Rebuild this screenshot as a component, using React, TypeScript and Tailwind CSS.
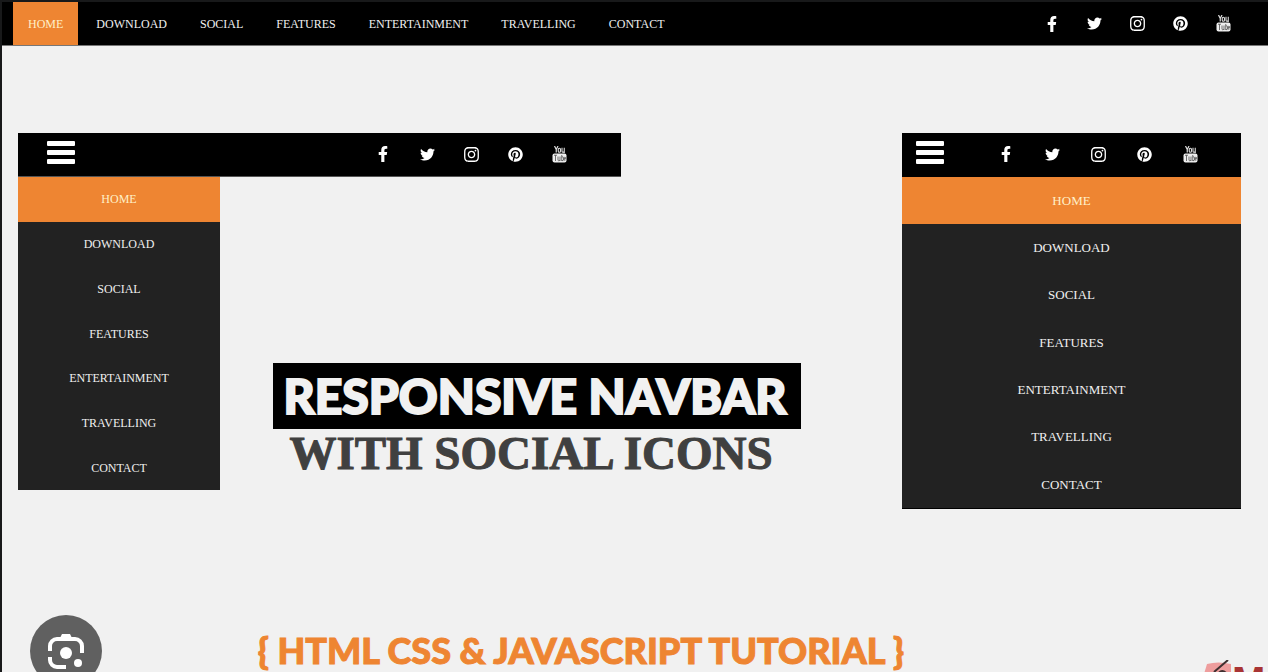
import { FaFacebookF, FaInstagram, FaPinterest, FaTwitter } from "react-icons/fa";

const links = ["HOME", "DOWNLOAD", "SOCIAL", "FEATURES", "ENTERTAINMENT", "TRAVELLING", "CONTACT"];

function YouTubeIcon() {
  return (
    <svg viewBox="0 0 30 34" className="h-[17px] w-[15px]" aria-hidden="true">
      <path d="M5 0l3.5 7v6M12 0L8.5 7" fill="none" stroke="#ddd" strokeWidth="2.4" />
      <rect x="12.5" y="4.5" width="4.5" height="8" rx="2" fill="none" stroke="#ddd" strokeWidth="2.2" />
      <path d="M20 3.5v7q0 2 2 2t2.5-2M24.5 3.5V14" fill="none" stroke="#ddd" strokeWidth="2.2" />
      <rect x="1" y="15" width="28" height="18" rx="4" fill="#eee" />
      <path d="M4 18.5h6M7 18.5V30M12 21v7q0 1.500 1.500 1.500t2.500-1.500M16 21v9M19.500 18v12M19.500 22q3.500-1 3.500 1v5q0 2-3.500 1M26.800 28q-2 2-2-1v-4q1-2 2.200 0v2.500h-2" fill="none" stroke="#444" strokeWidth="1.500" />
    </svg>
  );
}

const socials = [
  { name: "Facebook", icon: <FaFacebookF size={16} /> },
  { name: "Twitter", icon: <FaTwitter size={15} /> },
  { name: "Instagram", icon: <FaInstagram size={17} /> },
  { name: "Pinterest", icon: <FaPinterest size={15} /> },
  { name: "YouTube", icon: <YouTubeIcon /> },
];

function Socials({ cell }: { cell: string }) {
  return (
    <ul className="flex items-center text-white">
      {socials.map((s) => (
        <li key={s.name} className={cell}>
          <a href="#" aria-label={s.name} className="flex h-[42px] items-center justify-center">
            {s.icon}
          </a>
        </li>
      ))}
    </ul>
  );
}

function MenuButton() {
  return (
    <button type="button" aria-label="Toggle menu" className="mt-2 flex w-7 flex-col gap-1">
      <span className="h-[5px] rounded-[1px] bg-white" />
      <span className="h-[5px] rounded-[1px] bg-white" />
      <span className="h-[5px] rounded-[1px] bg-white" />
    </button>
  );
}

function SideMenu({ height }: { height: string }) {
  return (
    <ul className={`flex flex-col bg-[#222222] ${height}`}>
      {links.map((label, i) => (
        <li key={label} className="flex-1">
          <a
            href="#"
            className={`flex h-full items-center justify-center ${i === 0 ? "bg-[#ee8532] text-[#fff0c8]" : "text-[#f0f0f0]"}`}
          >
            {label}
          </a>
        </li>
      ))}
    </ul>
  );
}

export default function App() {
  return (
    <div className="relative flex h-screen flex-col overflow-hidden border-t-2 border-l-2 border-[#18191a] bg-[#f1f1f1] font-['Liberation_Serif',serif]">
      <header className="flex shrink-0 items-center justify-between border-b border-[#777] bg-black pr-[23px] pl-[11px]">
        <nav aria-label="Main">
          <ul className="flex gap-[3px] text-[12px] text-[#f0f0f0]">
            {links.map((label, i) => (
              <li key={label}>
                <a
                  href="#"
                  className={`flex h-[43px] items-center px-[15px] ${i === 0 ? "bg-[#ee8532] text-[#fff0c8]" : ""}`}
                >
                  {label}
                </a>
              </li>
            ))}
          </ul>
        </nav>
        <Socials cell="w-[43px]" />
      </header>

      <main className="flex shrink-0 flex-col pt-[87px]">
        <div className="flex items-start justify-between pr-[27px] pl-4">
          <section>
            <div className="flex h-11 w-[603px] items-start justify-between border-b border-[#555] bg-black pr-10 pl-[29px]">
              <MenuButton />
              <Socials cell="w-11" />
            </div>
            <div className="flex items-start">
              <nav aria-label="Tablet" className="w-[202px] shrink-0 text-[12px]">
                <SideMenu height="h-[313px]" />
              </nav>
              <h1 className="ml-[53px] pt-[186px] text-center whitespace-nowrap">
                <span className="flex h-[66px] w-[528px] items-center justify-center bg-black pr-1 font-['Lato',sans-serif] text-[48px] font-black text-[#f1f1f1] [-webkit-text-stroke:2px_#f1f1f1]">
                  RESPONSIVE NAVBAR
                </span>
                <span className="block pr-3 text-[47px] leading-[48px] font-bold text-[#404040] [-webkit-text-stroke:1px_#404040]">
                  WITH SOCIAL ICONS
                </span>
              </h1>
            </div>
          </section>

          <section className="w-[339px]">
            <div className="flex h-11 items-start justify-between bg-black pr-7 pl-[14px]">
              <MenuButton />
              <Socials cell="w-[46px]" />
            </div>
            <nav aria-label="Phone" className="border-b border-black text-[13px]">
              <SideMenu height="h-[331px]" />
            </nav>
          </section>
        </div>

        <h2 className="mt-[111px] mr-[108px] text-center font-['Lato',sans-serif] text-[36px] leading-[60px] font-black whitespace-nowrap text-[#ee8532] [-webkit-text-stroke:1px_#ee8532]">
          {"{ HTML CSS & JAVASCRIPT TUTORIAL }"}
        </h2>
      </main>

      <button
        type="button"
        aria-label="Search inside image"
        className="absolute -bottom-[15px] left-7 flex size-[72px] items-center justify-center rounded-full bg-[#606060]"
      >
        <svg viewBox="0 0 36 36" className="size-9" fill="none" aria-hidden="true">
          <path d="M2 18V13a7 7 0 0 1 7-7h18a7 7 0 0 1 7 7v7M2 24v3a7 7 0 0 0 7 7h9" stroke="#fff" strokeWidth="4" />
          <path d="M12 5l2-4h8l2 4z" fill="#fff" />
          <circle cx="18" cy="20" r="6" fill="#fff" />
          <circle cx="30" cy="30" r="4" fill="#fff" />
        </svg>
      </button>

      <div className="absolute right-0 bottom-0 flex h-3 w-16 items-start overflow-hidden" aria-hidden="true">
        <svg viewBox="0 0 28 14" className="h-3.5 w-7 shrink-0">
          <path d="M3 4q11-3 24 0v10H0z" fill="#ee9d9d" />
          <path d="M10 12L24 0M14 14q4-6 9 0" fill="none" stroke="#403030" strokeWidth="2" />
        </svg>
        <span className="font-['Liberation_Sans',sans-serif] text-[40px] leading-[42px] font-bold text-[#a83434]">M</span>
      </div>
    </div>
  );
}
